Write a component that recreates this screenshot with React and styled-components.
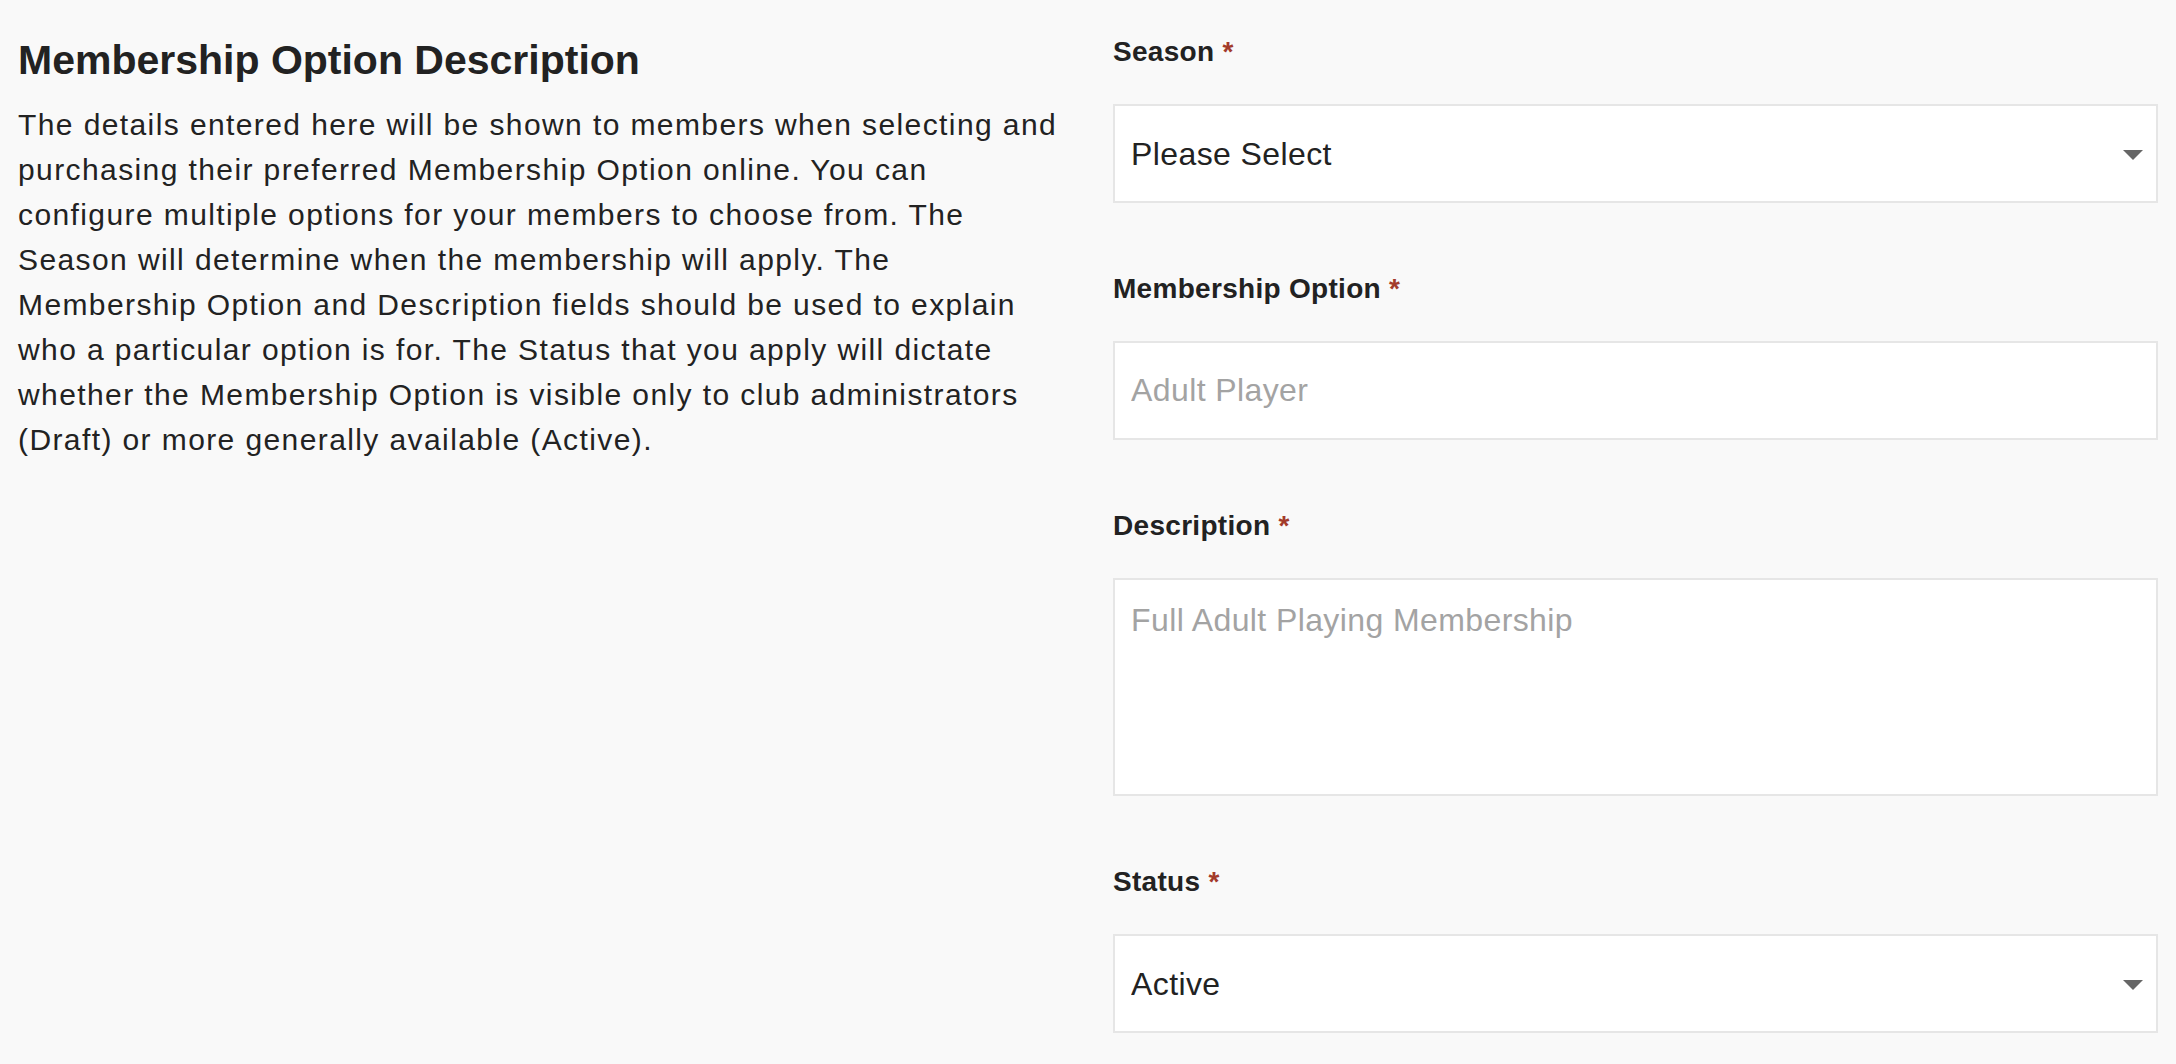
import React from "react";
import styled, { createGlobalStyle } from "styled-components";

const GlobalStyle = createGlobalStyle`
  html, body {
    margin: 0;
    padding: 0;
    background-color: #f9f9f9;
    overflow: hidden;
  }
  * {
    box-sizing: border-box;
  }
`;

const fields = [
  { label: "Season", kind: "select", value: "Please Select" },
  { label: "Membership Option", kind: "input", placeholder: "Adult Player" },
  { label: "Description", kind: "textarea", placeholder: "Full Adult Playing Membership" },
  { label: "Status", kind: "select", value: "Active" },
];

const Caret = () => (
  <CaretIcon width="20" height="10" viewBox="0 0 20 10">
    <path d="M0 0 L20 0 L10 10 Z" fill="#666666" />
  </CaretIcon>
);

const Field = ({ field }) => (
  <FieldGroup>
    <Label>
      {field.label} <Required>*</Required>
    </Label>
    {field.kind === "select" && (
      <SelectWrap>
        <Select defaultValue={field.value}>
          <option>{field.value}</option>
        </Select>
        <Caret />
      </SelectWrap>
    )}
    {field.kind === "input" && <TextInput placeholder={field.placeholder} />}
    {field.kind === "textarea" && <TextArea placeholder={field.placeholder} />}
  </FieldGroup>
);

const App = () => {
  return (
    <>
      <GlobalStyle />
      <Page>
        <InfoColumn>
          <Heading>Membership Option Description</Heading>
          <Body>
            The details entered here will be shown to members when selecting and
            purchasing their preferred Membership Option online. You can configure
            multiple options for your members to choose from. The Season will
            determine when the membership will apply. The Membership Option and
            Description fields should be used to explain who a particular option is
            for. The Status that you apply will dictate whether the Membership Option
            is visible only to club administrators (Draft) or more generally
            available (Active).
          </Body>
        </InfoColumn>
        <FormColumn>
          {fields.map((f) => (
            <Field key={f.label} field={f} />
          ))}
        </FormColumn>
      </Page>
    </>
  );
};

export default App;

const font = `"Liberation Sans", Arial, Helvetica, sans-serif`;

const Page = styled.div`
  display: grid;
  grid-template-columns: 1fr 1fr;
  column-gap: 50px;
  padding: 0 18px;
  min-height: 1064px;
  font-family: ${font};
  color: #222222;
`;

const InfoColumn = styled.div`
  padding-top: 36px;
`;

const Heading = styled.h2`
  font-size: 41px;
  font-weight: 700;
  line-height: 1.2;
  margin: 0 0 17px 0;
  color: #222222;
`;

const Body = styled.p`
  font-size: 30px;
  line-height: 45px;
  margin: 0;
  letter-spacing: 1.4px;
  color: #222222;
`;

const FormColumn = styled.div`
  padding-top: 31px;
  display: flex;
  flex-direction: column;
  gap: 65px;
`;

const FieldGroup = styled.div`
  display: flex;
  flex-direction: column;
  gap: 31px;
`;

const Label = styled.div`
  font-size: 28px;
  font-weight: 700;
  line-height: 42px;
  letter-spacing: 0.3px;
  color: #222222;
`;

const Required = styled.span`
  color: #a33b2b;
  font-weight: 700;
`;

const boxStyles = `
  width: 100%;
  background-color: #ffffff;
  border: 2px solid #e6e6e6;
  border-radius: 0;
  font-family: ${font};
  font-size: 32px;
  letter-spacing: 0.4px;
  color: #222222;
  outline: none;
  margin: 0;
  &::placeholder {
    color: #a3a3a3;
    opacity: 1;
  }
`;

const TextInput = styled.input`
  ${boxStyles}
  height: 99px;
  padding: 0 16px;
`;

const TextArea = styled.textarea`
  ${boxStyles}
  height: 218px;
  padding: 22px 16px;
  line-height: normal;
  resize: none;
  display: block;
`;

const SelectWrap = styled.div`
  position: relative;
`;

const Select = styled.select`
  ${boxStyles}
  height: 99px;
  padding: 0 60px 0 16px;
  appearance: none;
  -webkit-appearance: none;
  display: block;
`;

const CaretIcon = styled.svg`
  position: absolute;
  right: 15px;
  top: 50%;
  margin-top: -4px;
  pointer-events: none;
`;
